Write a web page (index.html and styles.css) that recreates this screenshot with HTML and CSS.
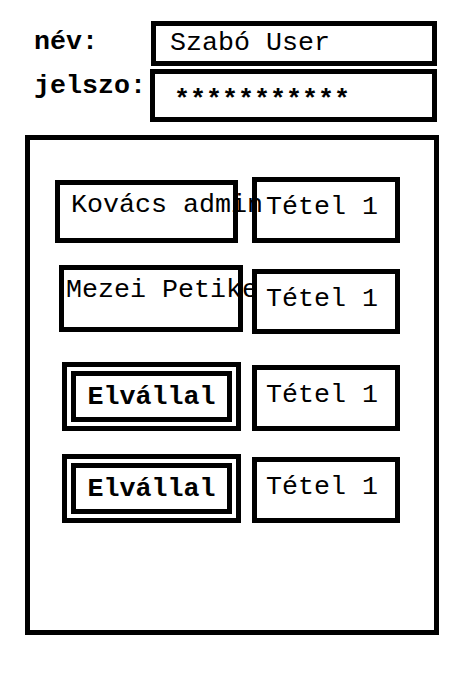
FILE: index.html
```html
<!DOCTYPE html>
<html lang="hu">
<head>
<meta charset="utf-8">
<title>Wireframe</title>
<link rel="stylesheet" href="styles.css">
</head>
<body>
<div class="login">
  <div class="field field-name">
    <span class="label label-name">név:</span>
    <div class="input input-name">Szabó User</div>
  </div>
  <div class="field field-pass">
    <span class="label label-pass">jelszo:</span>
    <div class="input input-pass">***********</div>
  </div>
</div>
<div class="board">
  <div class="row row-1">
    <div class="card user user-1">Kovács admin</div>
    <div class="card item item-1">Tétel 1</div>
  </div>
  <div class="row row-2">
    <div class="card user user-2">Mezei Petike</div>
    <div class="card item item-2">Tétel 1</div>
  </div>
  <div class="row row-3">
    <div class="btn"><div class="btn-inner">Elvállal</div></div>
    <div class="card item item-3">Tétel 1</div>
  </div>
  <div class="row row-4">
    <div class="btn"><div class="btn-inner">Elvállal</div></div>
    <div class="card item item-3">Tétel 1</div>
  </div>
</div>
</body>
</html>
```

FILE: styles.css
```css
* { box-sizing: border-box; }

html, body {
  margin: 0;
  padding: 0;
  background: #fff;
}

body {
  width: 464px;
  height: 679px;
  font-family: "Courier New", "Nimbus Mono PS", "Nimbus Mono L", "FreeMono", "Liberation Mono", monospace;
  font-size: 20pt;
  line-height: 30px;
  color: #000;
  overflow: hidden;
}

.login {
  padding-top: 21px;
}

.field {
  display: flex;
  align-items: flex-start;
}

.field-pass {
  margin-top: 3px;
}

.label {
  font-weight: bold;
  padding-left: 34px;
  white-space: nowrap;
}

.label-name {
  flex: 0 0 151px;
  margin-top: 6px;
}

.label-pass {
  flex: 0 0 150px;
  margin-top: 2px;
}

.input {
  border: 5px solid #000;
  white-space: nowrap;
}

.input-name {
  width: 286px;
  height: 45px;
  padding: 2px 0 0 14px;
}

.input-pass {
  width: 287px;
  height: 53px;
  padding: 11px 0 0 19px;
  font-weight: bold;
}

.board {
  margin: 13px 0 0 25px;
  width: 414px;
  height: 500px;
  border: 5px solid #000;
}

.row {
  display: flex;
  align-items: flex-start;
}

.row-1 { margin-top: 37px; }
.row-2 { margin-top: 22px; }
.row-3 { margin-top: 28px; }
.row-4 { margin-top: 23px; }

.card {
  border: 5px solid #000;
  white-space: nowrap;
}

.user-1 {
  width: 183px;
  height: 63px;
  margin: 3px 0 0 25px;
  padding: 5px 0 0 11px;
}

.user-2 {
  width: 184px;
  height: 67px;
  margin-left: 29px;
  padding: 5px 0 0 2px;
}

.item {
  width: 148px;
  height: 66px;
  padding: 10px 0 0 9px;
}

.item-1 { margin-left: 14px; }

.item-2 {
  height: 65px;
  margin: 4px 0 0 9px;
}

.item-3 { margin: 3px 0 0 11px; }

.btn {
  width: 179px;
  height: 69px;
  margin-left: 32px;
  border: 5px solid #000;
  padding: 4px;
}

.btn-inner {
  height: 51px;
  border: 5px solid #000;
  padding-top: 6px;
  text-align: center;
  font-weight: bold;
  white-space: nowrap;
}
```
